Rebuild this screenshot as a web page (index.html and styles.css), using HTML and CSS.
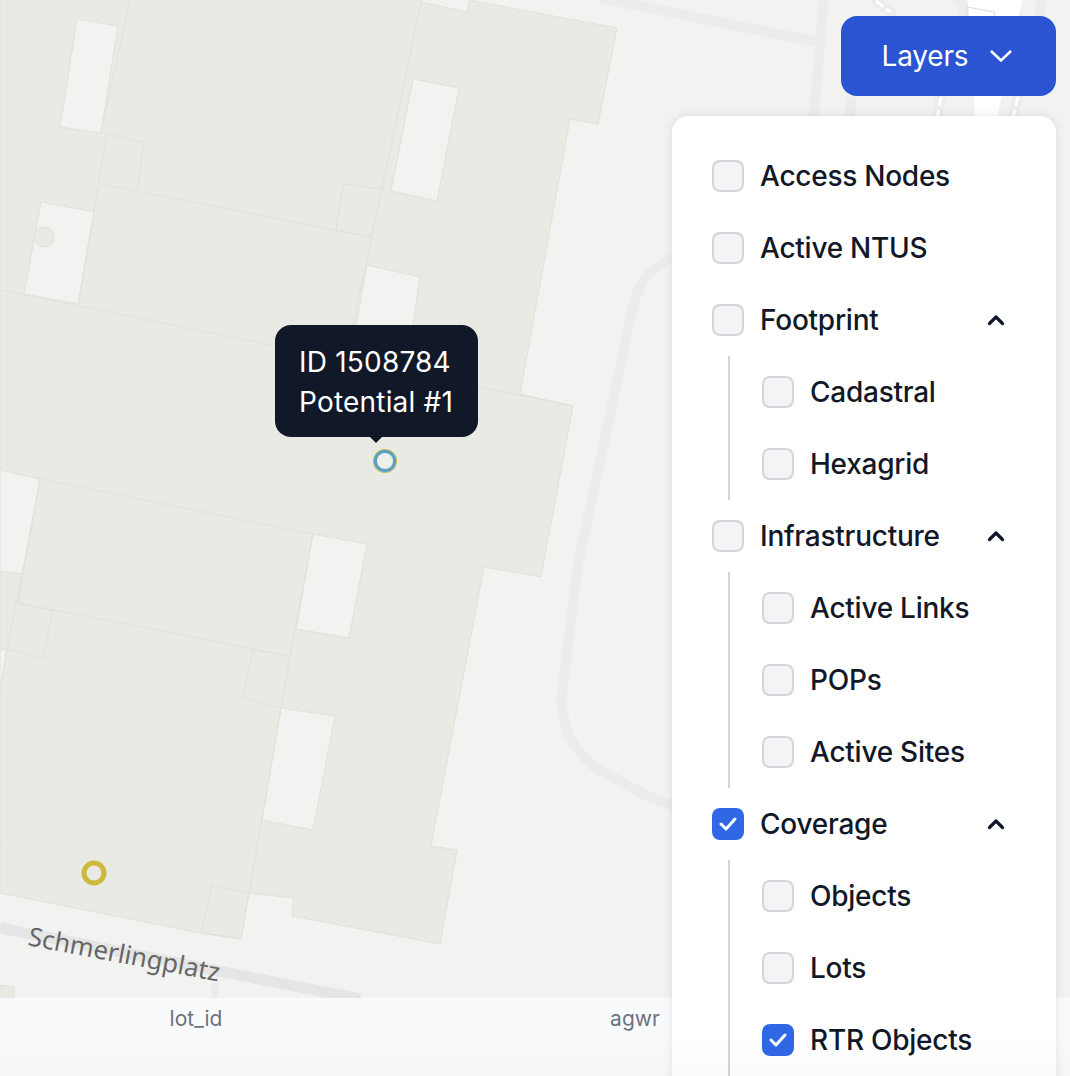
FILE: index.html
```html
<!DOCTYPE html>
<html>
<head>
  <title>Coverage Map</title>
  <link rel="stylesheet" href="styles.css">
</head>
<body>
  <div class="page">
    <div class="map">
      <svg class="map-canvas" width="1070" height="998" viewBox="0 0 1070 998">
        <!-- roads -->
        <g class="road">
          <path d="M600 -2 L817 42"/>
          <path d="M824 -2 L813 125"/>
          <path d="M672 257 L650 272 Q638 285 632 310 L609 420 L578 564 L561 703 Q564 722 570 738 Q580 755 596 768 L643 794 L680 808"/>
          <path d="M852 97 L848 125"/>
          <path d="M873 -2 L895 16"/>
          <path d="M957 -2 L964 8 L964 18"/>
          <path d="M1042 -2 L1039 18"/>
          <path d="M941 94 L936 125"/>
          <path d="M1018 94 L1012 125"/>
        </g>
        <polygon class="road-white" points="968,0 1022,0 997,118 975,118"/>
        <polygon class="track-box" points="967,7 995,12 994,20 966,20"/>
        <g class="track-dash">
          <path d="M876 1 L890 12"/>
          <path d="M941 97 L937 118"/>
          <path d="M1018 97 L1013 118"/>
        </g>
        <path class="road-big" d="M0 928 L340 995 L360 999"/>
        <path class="road-side" d="M215 983 L215 1000"/>
        <polygon class="bld" points="0,985 14,987 14,1000 0,1000"/>

        <!-- building block -->
        <polygon class="bld" points="0,0 469,0 617,28 598,124 570,119 520,394 573,406 541,577 484,567 431,846 457,850 440,944 292,916 294,898 249,893 241,939 201,933 0,893"/>

        <!-- courtyards -->
        <polygon class="yard" points="77,19 118,26 101,133 60,127"/>
        <polygon class="yard" points="41,202 95,212 78,304 24,294"/>
        <polygon class="yard" points="413,79 459,88 437,201 391,191"/>
        <polygon class="yard" points="367,265 420,277 405,380 348,370"/>
        <polygon class="yard" points="425,-2 470,-2 467,12 421,2"/>
        <polygon class="yard" points="313,534 367,544 349,638 296,629"/>
        <polygon class="yard" points="281,708 335,716 313,830 262,820"/>
        <polygon class="yard" points="0,470 40,479 22,574 0,571"/>
        <polygon class="yard" points="0,650 7,649 0,690"/>
        <circle class="bld" cx="44" cy="237" r="10"/>

        <!-- walls -->
        <g class="wall">
          <path d="M130 0 L101 133"/>
          <path d="M107 134 L144 142 L137 191"/>
          <path d="M107 134 L78 304"/>
          <path d="M100 184 L371 237"/>
          <path d="M343 184 L382 189 L371 237 L336 230 Z"/>
          <path d="M421 2 L382 189 L353 325"/>
          <path d="M0 290 L573 406"/>
          <path d="M40 479 L313 534"/>
          <path d="M40 479 L18 603 L290 656 L313 534"/>
          <path d="M18 603 L53 611 L43 659 L7 649 L0 690"/>
          <path d="M22 574 L7 649"/>
          <path d="M253 650 L290 656 L281 708 L243 698 Z"/>
          <path d="M281 708 L249 893"/>
          <path d="M212 885 L249 893 L241 939 L201 933 Z"/>
          <path d="M0 843 L-2 850"/>
        </g>

        <circle class="marker-yellow" cx="94" cy="873" r="10"/>
        <circle class="marker-edge" cx="385" cy="461" r="11.4"/>
        <circle class="marker-blue" cx="385" cy="461" r="9.6"/>

        <text class="street" transform="translate(27 945) rotate(10.8)">Schmerlingplatz</text>
      </svg>

      <div class="tooltip">ID 1508784<br>Potential #1</div>
    </div>

    <div class="table-head">
      <div class="table-cell">lot_id</div>
      <div class="table-cell">agwr</div>
    </div>

    <button class="layers-btn">
      Layers
      <svg width="24" height="14" viewBox="0 0 24 14"><polyline points="2,2 12,11.5 22,2"/></svg>
    </button>

    <div class="layers-panel">
      <div class="layer-row"><span class="check"></span><span class="layer-name">Access Nodes</span></div>
      <div class="layer-row"><span class="check"></span><span class="layer-name">Active NTUS</span></div>

      <div class="layer-row">
        <span class="check"></span><span class="layer-name">Footprint</span>
        <svg class="chevron" width="18" height="12" viewBox="0 0 18 12"><polyline points="2.5,9.5 9,3 15.5,9.5"/></svg>
      </div>
      <div class="layer-children">
        <div class="layer-row"><span class="check"></span><span class="layer-name">Cadastral</span></div>
        <div class="layer-row"><span class="check"></span><span class="layer-name">Hexagrid</span></div>
      </div>

      <div class="layer-row">
        <span class="check"></span><span class="layer-name">Infrastructure</span>
        <svg class="chevron" width="18" height="12" viewBox="0 0 18 12"><polyline points="2.5,9.5 9,3 15.5,9.5"/></svg>
      </div>
      <div class="layer-children">
        <div class="layer-row"><span class="check"></span><span class="layer-name">Active Links</span></div>
        <div class="layer-row"><span class="check"></span><span class="layer-name">POPs</span></div>
        <div class="layer-row"><span class="check"></span><span class="layer-name">Active Sites</span></div>
      </div>

      <div class="layer-row">
        <span class="check checked"><svg width="32" height="32" viewBox="0 0 32 32"><polyline points="9,16 14,21 23,11"/></svg></span>
        <span class="layer-name">Coverage</span>
        <svg class="chevron" width="18" height="12" viewBox="0 0 18 12"><polyline points="2.5,9.5 9,3 15.5,9.5"/></svg>
      </div>
      <div class="layer-children">
        <div class="layer-row"><span class="check"></span><span class="layer-name">Objects</span></div>
        <div class="layer-row"><span class="check"></span><span class="layer-name">Lots</span></div>
        <div class="layer-row">
          <span class="check checked"><svg width="32" height="32" viewBox="0 0 32 32"><polyline points="9,16 14,21 23,11"/></svg></span>
          <span class="layer-name">RTR Objects</span>
        </div>
      </div>
    </div>

    <div class="bottom-fade"></div>
  </div>
</body>
</html>
```

FILE: styles.css
```css
html, body {
  margin: 0;
  height: 100%;
  overflow: hidden;
}
body {
  font-family: Inter, "Liberation Sans", sans-serif;
  color: #111827;
}
.page {
  position: relative;
  width: 1070px;
  height: 1076px;
  overflow: hidden;
  background: #f9fafb;
}

/* map */
.map {
  position: relative;
  height: 998px;
  background: #f2f2f0;
}
.map-canvas {
  display: block;
}
.road path {
  fill: none;
  stroke: #ececec;
  stroke-width: 10;
}
.road-white {
  fill: #fff;
}
.track-box {
  fill: none;
  stroke: #dcdcdc;
  stroke-width: 1;
}
.track-dash path {
  fill: none;
  stroke: #fff;
  stroke-width: 3;
  stroke-dasharray: 9 4;
}
.road-big {
  fill: none;
  stroke: #e5e5e5;
  stroke-width: 11;
}
.road-side {
  fill: none;
  stroke: #ebebeb;
  stroke-width: 7;
}
.bld {
  fill: #e9eae4;
  stroke: #e0e1db;
  stroke-width: 1;
}
.yard {
  fill: #f2f2f0;
  stroke: #e0e1db;
  stroke-width: 1;
}
.wall path {
  fill: none;
  stroke: #e0e1db;
  stroke-width: 1;
}
.marker-yellow {
  fill: none;
  stroke: #cdb93c;
  stroke-width: 5;
}
.marker-edge {
  fill: none;
  stroke: #c4b84a;
  stroke-width: 1.2;
}
.marker-blue {
  fill: #eef0ea;
  stroke: #5a9fc6;
  stroke-width: 3;
}
.street {
  font-family: "Noto Sans", sans-serif;
  font-size: 25.7px;
  fill: #666;
}

.tooltip {
  position: absolute;
  left: 275px;
  top: 325px;
  width: 155px;
  padding: 17px 24px 15px;
  border-radius: 16px;
  background: #111827;
  color: #fff;
  font-size: 28px;
  line-height: 40px;
  letter-spacing: 0.2px;
  white-space: nowrap;
}
.tooltip::after {
  content: "";
  position: absolute;
  left: 95px;
  bottom: -6px;
  border-left: 6px solid transparent;
  border-right: 6px solid transparent;
  border-top: 6px solid #111827;
}

/* table under the map */
.table-head {
  display: grid;
  grid-template-columns: 392px 486px;
  padding-top: 7px;
  background: #f9fafb;
}
.table-cell {
  text-align: center;
  font-size: 21px;
  line-height: 28px;
  color: #6b7280;
}

/* layers dropdown */
.layers-btn {
  position: absolute;
  top: 16px;
  right: 14px;
  width: 215px;
  height: 80px;
  display: flex;
  align-items: center;
  justify-content: center;
  gap: 21px;
  padding: 0 2px 0 0;
  border: none;
  border-radius: 16px;
  background: #2a54d1;
  color: #fff;
  font-family: inherit;
  font-size: 28px;
  letter-spacing: -0.2px;
}
.layers-btn polyline {
  fill: none;
  stroke: #fff;
  stroke-width: 2.6;
}
.layers-panel {
  position: absolute;
  top: 116px;
  right: 14px;
  width: 304px;
  padding: 40px;
  background: #fff;
  border-radius: 16px;
  box-shadow: 0 0 10px rgba(0, 0, 0, 0.1);
  display: flex;
  flex-direction: column;
  gap: 32px;
}
.layer-row {
  display: flex;
  align-items: center;
  height: 40px;
  font-size: 28px;
  font-weight: 500;
}
.layer-name {
  margin-left: 16px;
  letter-spacing: -0.25px;
}
.check {
  width: 32px;
  height: 32px;
  box-sizing: border-box;
  flex: none;
  border: 2px solid #d1d5db;
  border-radius: 8px;
  background: #f3f4f6;
}
.check.checked {
  border: none;
  background: #3067e4;
}
.check svg {
  display: block;
}
.check polyline {
  fill: none;
  stroke: #fff;
  stroke-width: 3;
  stroke-linecap: round;
  stroke-linejoin: round;
}
.chevron {
  margin-left: auto;
  margin-right: 11px;
}
.chevron polyline {
  fill: none;
  stroke: #111827;
  stroke-width: 3.2;
  stroke-linecap: round;
  stroke-linejoin: round;
}
.layer-children {
  display: flex;
  flex-direction: column;
  gap: 32px;
  margin: -16px 0 -16px 16px;
  padding: 16px 0 16px 32px;
  border-left: 2px solid #d1d5db;
}
.bottom-fade {
  position: absolute;
  left: 0;
  right: 0;
  bottom: 0;
  height: 40px;
  background: linear-gradient(rgba(0, 0, 0, 0), rgba(0, 0, 0, 0.015));
  pointer-events: none;
}
```
